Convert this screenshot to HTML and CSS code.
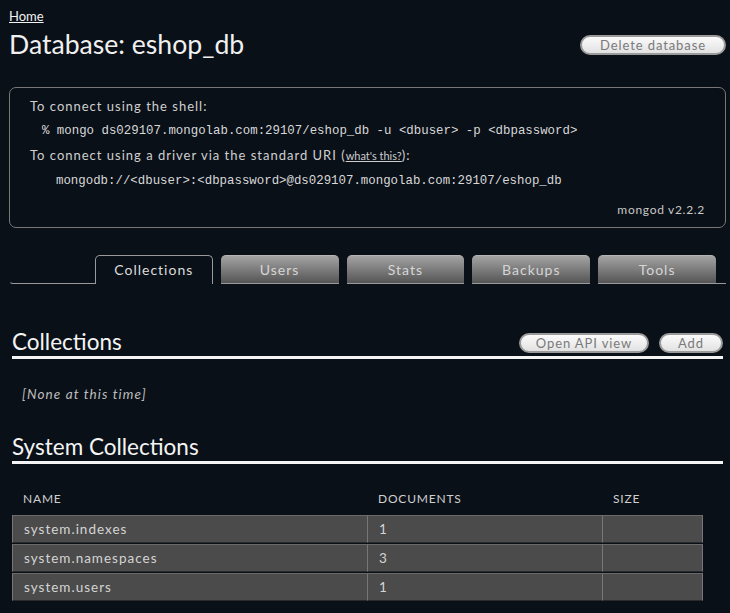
FILE: index.html
```html
<!DOCTYPE html>
<html>
<head>
<meta charset="utf-8">
<link rel="stylesheet" href="styles.css">
</head>
<body>
<div class="page">
  <div class="crumbs"><a href="#">Home</a></div>
  <div class="titlebar">
    <h1>Database: eshop_db</h1>
    <button class="pill">Delete database</button>
  </div>
  <div class="connect">
    <p class="label">To connect using the shell:</p>
    <p class="code shell">% mongo ds029107.mongolab.com:29107/eshop_db -u &lt;dbuser&gt; -p &lt;dbpassword&gt;</p>
    <p class="label">To connect using a driver via the standard URI (<a href="#" class="small">what's this?</a>):</p>
    <p class="code uri">mongodb://&lt;dbuser&gt;:&lt;dbpassword&gt;@ds029107.mongolab.com:29107/eshop_db</p>
    <p class="version">mongod v2.2.2</p>
  </div>
  <div class="tabs">
    <div class="tab-lead"></div>
    <div class="tab active">Collections</div>
    <div class="tab">Users</div>
    <div class="tab">Stats</div>
    <div class="tab">Backups</div>
    <div class="tab">Tools</div>
    <div class="tab-tail"></div>
  </div>
  <div class="section first">
    <div class="sec-head">
      <h2>Collections</h2>
      <div class="actions">
        <button class="pill api">Open API view</button>
        <button class="pill add">Add</button>
      </div>
    </div>
    <p class="none">[None at this time]</p>
  </div>
  <div class="section second">
    <div class="sec-head">
      <h2>System Collections</h2>
    </div>
    <table class="grid">
      <thead>
        <tr><th class="c-name">NAME</th><th class="c-docs">DOCUMENTS</th><th class="c-size">SIZE</th></tr>
      </thead>
      <tbody>
        <tr><td>system.indexes</td><td>1</td><td></td></tr>
        <tr><td>system.namespaces</td><td>3</td><td></td></tr>
        <tr><td>system.users</td><td>1</td><td></td></tr>
      </tbody>
    </table>
  </div>
</div>
</body>
</html>
```
FILE: styles.css
```css
html, body {
  margin: 0;
  padding: 0;
  background: #0a1018;
  color: #e6e6e6;
  font-family: "Lato", "Open Sans", sans-serif;
}
.page {
  padding: 8px 4px 0 9px;
  width: 717px;
}
a { color: #f2f2f2; }
.crumbs { font-size: 13px; line-height: 16px; }
.titlebar {
  display: flex;
  align-items: center;
  justify-content: space-between;
  margin-top: 5px;
}
h1 {
  margin: 0;
  font-weight: 400;
  font-size: 26.6px;
  line-height: 30px;
  color: #f0f0f0;
}
.pill {
  font-family: "Lato", sans-serif;
  font-size: 13px;
  letter-spacing: 0.9px;
  color: #7a7a7a;
  background: linear-gradient(#fbfbfb, #e2e2e2);
  border: 2px solid #9a9a9a;
  border-radius: 11px;
  height: 20px;
  padding: 0;
  line-height: 16px;
}
.titlebar .pill { width: 146px; margin-top: 2px; }
.connect {
  margin-top: 28px;
  border: 1px solid #777;
  border-radius: 7px;
  padding: 10px 20px 0 20px;
  box-sizing: border-box;
  height: 141px;
  display: flex;
  flex-direction: column;
}
.connect p { margin: 0; }
.label {
  font-size: 13px;
  letter-spacing: 1px;
  color: #cfcfcf;
  line-height: 17px;
}
.code {
  font-family: "Liberation Mono", monospace;
  font-size: 12.4px;
  color: #d8d8d8;
  line-height: 14px;
}
.shell { padding-left: 12px; margin-top: 9px !important; }
.code + .label { margin-top: 9px !important; }
.uri { padding-left: 26px; margin-top: 10px !important; }
.small { font-size: 11px; letter-spacing: 0; color: #ccc; }
.version {
  text-align: right;
  font-size: 12px;
  letter-spacing: 0.7px;
  color: #c8c8c8;
  margin-top: auto !important;
  margin-bottom: 10px !important;
}
.tabs {
  display: flex;
  align-items: flex-end;
  margin-top: 27px;
  height: 29px;
}
.tab-lead {
  width: 85px;
  height: 10px;
  border-bottom: 1px solid #9a9a9a;
  border-left: 1px solid transparent;
  border-bottom-left-radius: 4px;
}
.tab {
  width: 118px;
  height: 29px;
  box-sizing: border-box;
  margin-right: 8px;
  border-radius: 5px 5px 0 0;
  text-align: center;
  font-size: 14px;
  letter-spacing: 1px;
  line-height: 27px;
  color: #d6d6d6;
  background: linear-gradient(#a3a3a3, #555);
  border-top: 1px solid #b4b4b4;
  border-bottom: 1px solid #9a9a9a;
}
.tab.active {
  background: #0a1018;
  border: 1px solid #9a9a9a;
  border-bottom: none;
  color: #dcdcdc;
}
.tab-tail {
  width: 10px;
  height: 1px;
  border-bottom: 1px solid #9a9a9a;
  margin-left: -8px;
}
.section { padding: 0 3px; }
.sec-head {
  display: flex;
  align-items: flex-end;
  justify-content: space-between;
  border-bottom: 3px solid #f4f4f4;
  height: 32px;
}
.first .sec-head { margin-top: 40px; }
.second .sec-head { margin-top: 25px; }
h2 {
  margin: 0;
  font-weight: 400;
  font-size: 22.5px;
  line-height: 28px;
  color: #f4f4f4;
}
.actions { display: flex; gap: 10px; padding-bottom: 3px; }
.api { width: 130px; }
.add { width: 64px; }
.none {
  margin: 27px 0 0 10px;
  font-style: italic;
  font-size: 13.5px;
  letter-spacing: 1.1px;
  color: #bdbdbd;
  height: 18px;
}
.grid {
  margin-top: 26px;
  border-collapse: separate;
  border-spacing: 0 1px;
  width: 691px;
  font-size: 13.5px;
  letter-spacing: 1px;
}
.grid th {
  text-align: left;
  font-weight: 400;
  font-size: 12px;
  letter-spacing: 0.8px;
  color: #cfcfcf;
  padding: 0 11px 8px;
}
.c-name { width: 333px; }
.c-docs { width: 213px; }
.grid td {
  background: #4b4b4b;
  height: 26px;
  padding: 0 11px;
  color: #d4d4d4;
  border-top: 1px solid #6a6a6a;
  border-bottom: 1px solid #2a2a2a;
  border-left: 1px solid #777;
}
.grid td:last-child { border-right: 1px solid #777; }
```
